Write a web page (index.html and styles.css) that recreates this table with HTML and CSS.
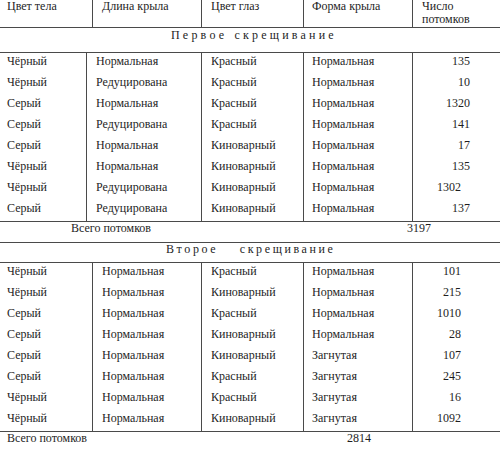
FILE: index.html
```html
<!DOCTYPE html>
<html lang="ru">
<head>
  <meta charset="UTF-8">
  <title>Скрещивание</title>
  <link rel="stylesheet" href="styles.css">
</head>
<body>
  <div class="sheet">
    <div class="row head">
      <div class="cell c1">Цвет тела</div>
      <div class="cell c2">Длина крыла</div>
      <div class="cell c3">Цвет глаз</div>
      <div class="cell c4">Форма крыла</div>
      <div class="cell c5">Число<br>потомков</div>
    </div>

    <div class="title title-first">Первое скрещивание</div>

    <div class="rows rows-first">
      <div class="row"><div class="cell c1">Чёрный</div><div class="cell c2">Нормальная</div><div class="cell c3">Красный</div><div class="cell c4">Нормальная</div><div class="cell c5 num">135</div></div>
      <div class="row"><div class="cell c1">Чёрный</div><div class="cell c2">Редуцирована</div><div class="cell c3">Красный</div><div class="cell c4">Нормальная</div><div class="cell c5 num">10</div></div>
      <div class="row"><div class="cell c1">Серый</div><div class="cell c2">Нормальная</div><div class="cell c3">Красный</div><div class="cell c4">Нормальная</div><div class="cell c5 num">1320</div></div>
      <div class="row"><div class="cell c1">Серый</div><div class="cell c2">Редуцирована</div><div class="cell c3">Красный</div><div class="cell c4">Нормальная</div><div class="cell c5 num">141</div></div>
      <div class="row"><div class="cell c1">Серый</div><div class="cell c2">Нормальная</div><div class="cell c3">Киноварный</div><div class="cell c4">Нормальная</div><div class="cell c5 num">17</div></div>
      <div class="row"><div class="cell c1">Чёрный</div><div class="cell c2">Нормальная</div><div class="cell c3">Киноварный</div><div class="cell c4">Нормальная</div><div class="cell c5 num">135</div></div>
      <div class="row"><div class="cell c1">Чёрный</div><div class="cell c2">Редуцирована</div><div class="cell c3">Киноварный</div><div class="cell c4">Нормальная</div><div class="cell c5 num shifted">1302</div></div>
      <div class="row"><div class="cell c1">Серый</div><div class="cell c2">Редуцирована</div><div class="cell c3">Киноварный</div><div class="cell c4">Нормальная</div><div class="cell c5 num">137</div></div>
    </div>

    <div class="total total-first">
      <span class="total-label">Всего потомков</span>
      <span class="total-value">3197</span>
    </div>

    <div class="title title-second">Второе скрещивание</div>

    <div class="rows rows-second">
      <div class="row"><div class="cell c1">Чёрный</div><div class="cell c2">Нормальная</div><div class="cell c3">Красный</div><div class="cell c4">Нормальная</div><div class="cell c5 num">101</div></div>
      <div class="row"><div class="cell c1">Чёрный</div><div class="cell c2">Нормальная</div><div class="cell c3">Киноварный</div><div class="cell c4">Нормальная</div><div class="cell c5 num">215</div></div>
      <div class="row"><div class="cell c1">Серый</div><div class="cell c2">Нормальная</div><div class="cell c3">Красный</div><div class="cell c4">Нормальная</div><div class="cell c5 num">1010</div></div>
      <div class="row"><div class="cell c1">Серый</div><div class="cell c2">Нормальная</div><div class="cell c3">Киноварный</div><div class="cell c4">Нормальная</div><div class="cell c5 num">28</div></div>
      <div class="row"><div class="cell c1">Серый</div><div class="cell c2">Нормальная</div><div class="cell c3">Киноварный</div><div class="cell c4">Загнутая</div><div class="cell c5 num">107</div></div>
      <div class="row"><div class="cell c1">Серый</div><div class="cell c2">Нормальная</div><div class="cell c3">Красный</div><div class="cell c4">Загнутая</div><div class="cell c5 num">245</div></div>
      <div class="row"><div class="cell c1">Чёрный</div><div class="cell c2">Нормальная</div><div class="cell c3">Красный</div><div class="cell c4">Загнутая</div><div class="cell c5 num">16</div></div>
      <div class="row"><div class="cell c1">Чёрный</div><div class="cell c2">Нормальная</div><div class="cell c3">Киноварный</div><div class="cell c4">Загнутая</div><div class="cell c5 num">1092</div></div>
    </div>

    <div class="total total-second">
      <span class="total-label">Всего потомков</span>
      <span class="total-value">2814</span>
    </div>
  </div>
</body>
</html>
```

FILE: styles.css
```css
body {
  margin: 0;
  background-color: #ffffff;
  font-family: "Liberation Serif", "DejaVu Serif", "Times New Roman", serif;
  font-size: 12px;
  line-height: 13px;
  color: #1e1e1e;
}

.sheet {
  width: 500px;
  overflow: hidden;
}

.row {
  display: grid;
  grid-template-columns: 93px 109px 102px 109px 1fr;
  height: 21px;
}

.cell {
  box-sizing: border-box;
  padding: 2px 0 0 9px;
  white-space: nowrap;
}

.cell.c1 {
  padding-left: 7px;
}

.cell.c1,
.cell.c2,
.cell.c3,
.cell.c4 {
  border-right: 1px solid #4a4a4a;
}

.cell.c4 {
  padding-left: 8px;
}

/* header */
.head {
  height: 27px;
  border-bottom: 1px solid #4a4a4a;
}

.head .cell {
  padding-top: 0;
}

/* section titles */
.title {
  border-bottom: 1px solid #4a4a4a;
  white-space: nowrap;
}

.title-first {
  box-sizing: border-box;
  height: 25px;
  padding: 1px 0 0 171px;
  letter-spacing: 3.2px;
  word-spacing: 1px;
}

.title-second {
  box-sizing: border-box;
  height: 20px;
  padding-left: 166px;
  letter-spacing: 2.6px;
  word-spacing: 16px;
}

/* data rows */
.rows {
  border-bottom: 1px solid #4a4a4a;
}

.rows-first .row {
  grid-template-columns: 87px 115px 102px 109px 1fr;
}

.num {
  text-align: right;
  padding-right: 30px;
}

.rows-first .num.shifted {
  padding-right: 39px;
}

.rows-second .num {
  padding-right: 39px;
}

/* totals */
.total {
  height: 20px;
  white-space: nowrap;
}

.total-first {
  border-bottom: 1px solid #4a4a4a;
}

.total-first .total-label {
  margin-left: 71px;
}

.total-first .total-value {
  margin-left: 253px;
}

.total-second .total-label {
  margin-left: 7px;
}

.total-second .total-value {
  margin-left: 257px;
}
```
